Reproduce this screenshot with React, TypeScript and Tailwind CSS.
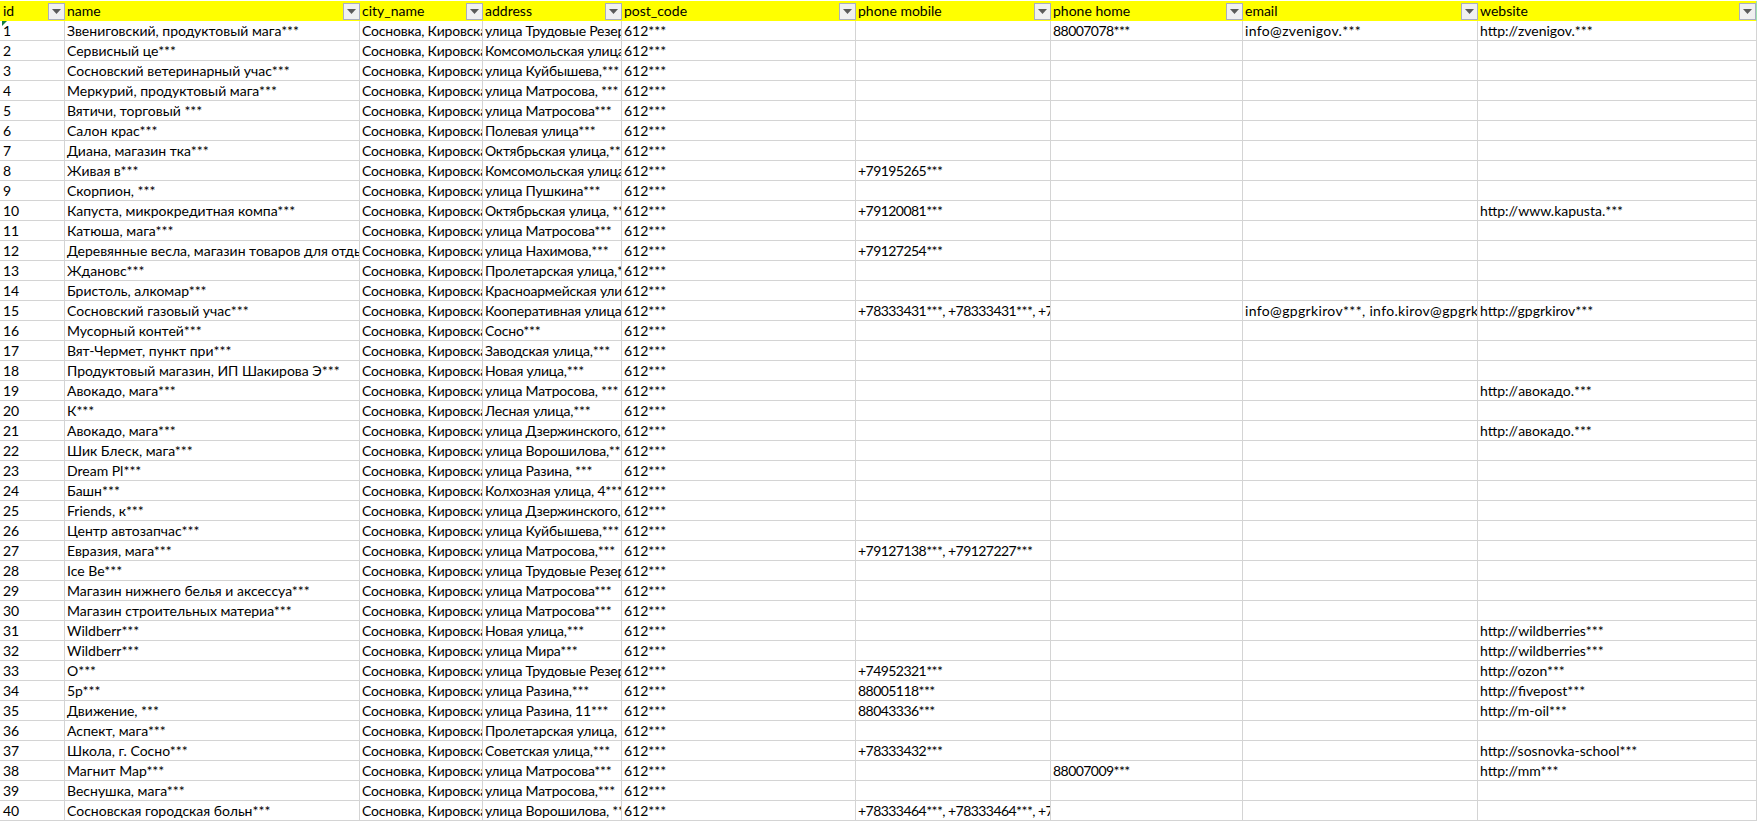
const widths = ["w-[65px]", "w-[295px]", "w-[123px]", "w-[139px]", "w-[234px]", "w-[195px]", "w-[192px]", "w-[235px]", "w-[279px]"];
const padding = ["pl-[3px]", "pl-[2px]", "pl-[2px]", "pl-[2px]", "pl-[2px]", "pl-[2px]", "pl-[2px]", "pl-[2px]", "pl-[2px]"];
const tracking = ["", "", "tracking-[-0.2px]", "tracking-[-0.2px]", "", "tracking-[-0.55px]", "tracking-[-0.55px]", "tracking-[0.35px]", ""];
const headers = ["id", "name", "city_name", "address", "post_code", "phone mobile", "phone home", "email", "website"];
const city = "Сосновка, Кировская область";

type R = [string, string, string?, string?, string?, string?];
const rows: R[] = [
  ["Звениговский, продуктовый мага***", "улица Трудовые Резервы, 1***", "", "88007078***", "info@zvenigov.***", "http://zvenigov.***"],
  ["Сервисный це***", "Комсомольская улица, ***"],
  ["Сосновский ветеринарный учас***", "улица Куйбышева,***"],
  ["Меркурий, продуктовый мага***", "улица Матросова, ***"],
  ["Вятичи, торговый ***", "улица Матросова***"],
  ["Салон крас***", "Полевая улица***"],
  ["Диана, магазин тка***", "Октябрьская улица,***"],
  ["Живая в***", "Комсомольская улица, ***", "+79195265***"],
  ["Скорпион, ***", "улица Пушкина***"],
  ["Капуста, микрокредитная компа***", "Октябрьская улица, ***", "+79120081***", "", "", "http://www.kapusta.***"],
  ["Катюша, мага***", "улица Матросова***"],
  ["Деревянные весла, магазин товаров для отдыха***", "улица Нахимова,***", "+79127254***"],
  ["Ждановс***", "Пролетарская улица,***"],
  ["Бристоль, алкомар***", "Красноармейская улица, ***"],
  ["Сосновский газовый учас***", "Кооперативная улица, ***", "+78333431***, +78333431***, +78333431***", "", "info@gpgrkirov***, info.kirov@gpgrkirov***", "http://gpgrkirov***"],
  ["Мусорный контей***", "Сосно***"],
  ["Вят-Чермет, пункт при***", "Заводская улица,***"],
  ["Продуктовый магазин, ИП Шакирова Э***", "Новая улица,***"],
  ["Авокадо, мага***", "улица Матросова, ***", "", "", "", "http://авокадо.***"],
  ["К***", "Лесная улица,***"],
  ["Авокадо, мага***", "улица Дзержинского, ***", "", "", "", "http://авокадо.***"],
  ["Шик Блеск, мага***", "улица Ворошилова,***"],
  ["Dream Pl***", "улица Разина, ***"],
  ["Башн***", "Колхозная улица, 4***"],
  ["Friends, к***", "улица Дзержинского, ***"],
  ["Центр автозапчас***", "улица Куйбышева,***"],
  ["Евразия, мага***", "улица Матросова,***", "+79127138***, +79127227***"],
  ["Ice Be***", "улица Трудовые Резервы, ***"],
  ["Магазин нижнего белья и аксессуа***", "улица Матросова***"],
  ["Магазин строительных материа***", "улица Матросова***"],
  ["Wildberr***", "Новая улица,***", "", "", "", "http://wildberries***"],
  ["Wildberr***", "улица Мира***", "", "", "", "http://wildberries***"],
  ["О***", "улица Трудовые Резервы, ***", "+74952321***", "", "", "http://ozon***"],
  ["5p***", "улица Разина,***", "88005118***", "", "", "http://fivepost***"],
  ["Движение, ***", "улица Разина, 11***", "88043336***", "", "", "http://m-oil***"],
  ["Аспект, мага***", "Пролетарская улица, ***"],
  ["Школа, г. Сосно***", "Советская улица,***", "+78333432***", "", "", "http://sosnovka-school***"],
  ["Магнит Мар***", "улица Матросова***", "", "88007009***", "", "http://mm***"],
  ["Веснушка, мага***", "улица Матросова,***"],
  ["Сосновская городская больн***", "улица Ворошилова, ***", "+78333464***, +78333464***, +78333464***"],
];

function FilterButton({ last }: { last: boolean }) {
  return (
    <span className={`absolute top-[2px] flex h-[17px] w-[17px] items-center justify-center border border-[#a9aec0] bg-[#f0f0f0] ${last ? "right-px" : "right-0"}`}>
      <svg width="9" height="5" viewBox="0 0 9 5"><path d="M0 0h9L4.5 5z" fill="#5a5a5a" /></svg>
    </span>
  );
}

export default function App() {
  return (
    <div className="relative h-[821px] w-[1757px] overflow-hidden bg-white pt-px font-['Lato',sans-serif] text-[14px] leading-5 text-black">
      <div className="flex h-5 bg-[#ffff00]">
        {headers.map((h, i) => (
          <div key={h} className={`relative shrink-0 ${padding[i]} ${widths[i]}`}>
            {h}
            <FilterButton last={i === headers.length - 1} />
          </div>
        ))}
      </div>
      {rows.map((r, n) => {
        const cells = [String(n + 1), r[0], city, r[1], "612***", r[2] ?? "", r[3] ?? "", r[4] ?? "", r[5] ?? ""];
        return (
          <div key={n} className="flex h-5">
            {cells.map((c, i) => (
              <div key={i} className={`h-5 shrink-0 overflow-hidden whitespace-nowrap border-r border-b border-[#d4d4d4] leading-[19px] ${padding[i]} ${tracking[i]} ${widths[i]}`}>
                {c}
              </div>
            ))}
          </div>
        );
      })}
      <div className="absolute left-[2px] top-[21px] h-0 w-0 border-t-[5px] border-r-[5px] border-t-[#107c41] border-r-transparent" />
      <div className="absolute right-0 top-px h-5 w-px bg-[#9fdfb0]" />
    </div>
  );
}
